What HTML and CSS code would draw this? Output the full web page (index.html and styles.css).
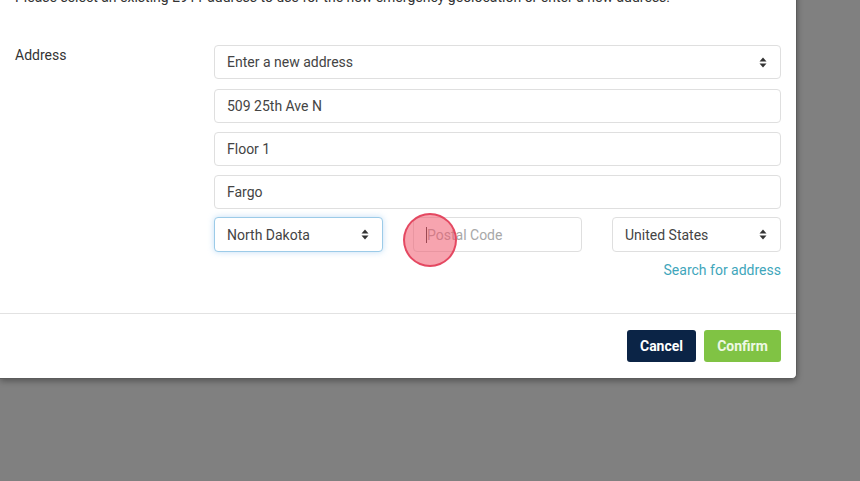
FILE: index.html
```html
<!DOCTYPE html>
<html>
<head>
<meta charset="utf-8">
<link rel="stylesheet" href="styles.css">
</head>
<body>
<div class="modal">
  <div class="modal-body">
    <p class="intro">Please select an existing E911 address to use for the new emergency geolocation or enter a new address.</p>
    <div class="form-row">
      <div class="label">Address</div>
      <div class="controls">
        <div class="control select first">
          <span class="val">Enter a new address</span>
          <svg class="arrows" width="8" height="11" viewBox="0 0 8 11"><path d="M4 0.5L7.5 4.5H0.5Z M4 10.5L7.5 6.5H0.5Z" fill="#333"/></svg>
        </div>
        <div class="control"><span class="val">509 25th Ave N</span></div>
        <div class="control"><span class="val">Floor 1</span></div>
        <div class="control"><span class="val">Fargo</span></div>
        <div class="triple">
          <div class="control select focus">
            <span class="val">North Dakota</span>
            <svg class="arrows" width="8" height="11" viewBox="0 0 8 11"><path d="M4 0.5L7.5 4.5H0.5Z M4 10.5L7.5 6.5H0.5Z" fill="#333"/></svg>
          </div>
          <div class="control postal">
            <span class="caret"></span><span class="placeholder">Postal Code</span>
            <span class="click"></span>
          </div>
          <div class="control select">
            <span class="val">United States</span>
            <svg class="arrows" width="8" height="11" viewBox="0 0 8 11"><path d="M4 0.5L7.5 4.5H0.5Z M4 10.5L7.5 6.5H0.5Z" fill="#333"/></svg>
          </div>
        </div>
        <div class="link-row"><a class="link">Search for address</a></div>
      </div>
    </div>
  </div>
  <div class="modal-footer">
    <button class="btn cancel">Cancel</button>
    <button class="btn confirm">Confirm</button>
  </div>
</div>
</body>
</html>
```
FILE: styles.css
```css
html, body {
  margin: 0;
  padding: 0;
  background: #808080;
  height: 100%;
  overflow: hidden;
}
body {
  font-family: Roboto, "Liberation Sans", Arial, sans-serif;
  font-size: 14px;
  color: #333;
}
.modal {
  width: 797px;
  margin-top: -28px;
  background: #fff;
  border-right: 1px solid #5c5c5c;
  border-bottom: 1px solid #5c5c5c;
  border-bottom-right-radius: 5px;
  box-sizing: border-box;
  box-shadow: 0 2px 6px rgba(0,0,0,0.35);
}
.modal-body {
  padding: 15px 15px 33px 15px;
}
.intro {
  margin: 0 0 38px 0;
  line-height: 20px;
}
.form-row {
  display: flex;
}
.label {
  width: 199px;
  flex: none;
  line-height: 20px;
}
.controls {
  flex: 1;
  display: flex;
  flex-direction: column;
  gap: 9px;
}
.control {
  height: 34px;
  box-sizing: border-box;
  border: 1px solid #dfdfdf;
  border-radius: 4px;
  padding: 0 12px;
  display: flex;
  align-items: center;
  color: #444;
  background: #fff;
  position: relative;
}
.first {
  margin-bottom: 1px;
}
.select {
  justify-content: space-between;
  padding-right: 13px;
}
.arrows {
  display: block;
}
.focus {
  border-color: #9ccbe8;
  box-shadow: 0 0 6px rgba(102,175,233,0.4);
}
.triple {
  display: grid;
  grid-template-columns: 1fr 1fr 1fr;
  gap: 30px;
  margin-top: -1px;
}
.triple .control {
  height: 35px;
}
.placeholder {
  color: #a8a8a8;
}
.caret {
  width: 1px;
  height: 16px;
  background: #333;
}
.click {
  position: absolute;
  left: -11px;
  top: -5px;
  width: 50px;
  height: 50px;
  border-radius: 50%;
  border: 2px solid rgba(224,56,84,0.85);
  background: rgba(240,90,110,0.55);
}
.link-row {
  display: flex;
  justify-content: flex-end;
  margin-top: -1px;
  line-height: 20px;
}
.link {
  color: #3fa6bb;
  cursor: pointer;
}
.modal-footer {
  border-top: 1px solid #e2e2e2;
  padding: 16px 15px 16px 15px;
  display: flex;
  justify-content: flex-end;
  gap: 8px;
}
.btn {
  font-family: Roboto, "Liberation Sans", Arial, sans-serif;
  font-size: 14px;
  font-weight: bold;
  height: 32px;
  padding: 0 12px;
  border: none;
  border-radius: 3px;
  color: #fff;
}
.cancel {
  background: #0b2446;
  width: 69px;
}
.confirm {
  background: #80c344;
  color: #eef8e4;
  width: 77px;
}
```
